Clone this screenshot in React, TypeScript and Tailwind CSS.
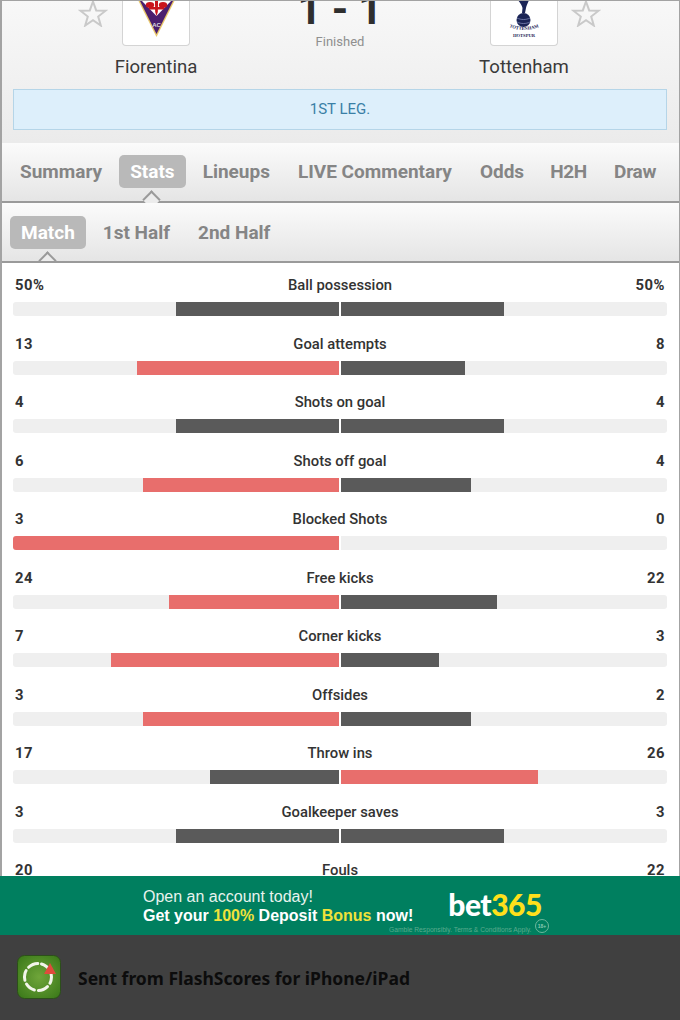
import React from "react";

const stats = [
  { name: "Ball possession", home: "50%", away: "50%", a: 50, b: 50 },
  { name: "Goal attempts", home: "13", away: "8", a: 13, b: 8 },
  { name: "Shots on goal", home: "4", away: "4", a: 4, b: 4 },
  { name: "Shots off goal", home: "6", away: "4", a: 6, b: 4 },
  { name: "Blocked Shots", home: "3", away: "0", a: 3, b: 0 },
  { name: "Free kicks", home: "24", away: "22", a: 24, b: 22 },
  { name: "Corner kicks", home: "7", away: "3", a: 7, b: 3 },
  { name: "Offsides", home: "3", away: "2", a: 3, b: 2 },
  { name: "Throw ins", home: "17", away: "26", a: 17, b: 26 },
  { name: "Goalkeeper saves", home: "3", away: "3", a: 3, b: 3 },
  { name: "Fouls", home: "20", away: "22", a: 20, b: 22 },
];

const Star = () => (
  <svg width="30" height="28" viewBox="0 0 30 28" className="absolute top-[-2px] left-[-17px]">
    <path d="M15 2.5 18.2 11.4 27.6 11.7 20.2 17.5 22.8 26.5 15 21.2 7.2 26.5 9.8 17.5 2.4 11.7 11.8 11.4Z" fill="none" stroke="#c9c9c9" strokeWidth="2" />
  </svg>
);

const ViolaCrest = () => (
  <svg width="66" height="43" viewBox="0 0 66 43">
    <path d="M15 -1 33.5 36 52 -1Z" fill="#e8c66a" />
    <path d="M17 0 33.5 33 50 0Z" fill="#4a1f6e" />
    <path d="M18 -1 33.5 15 49 -1Z" fill="#fff" />
    <path d="M32 -1h3v4l-.2 8-1.300 4-1.300-4-.2-8z" fill="#c9151c" />
    <path d="M26 6h15v2.500H26z" fill="#c9151c" />
    <ellipse cx="27" cy="4" rx="4.200" ry="2.900" fill="#c9151c" />
    <ellipse cx="40" cy="4" rx="4.200" ry="2.900" fill="#c9151c" />
    <text x="33.500" y="26" textAnchor="middle" fontSize="6" fontWeight="700" fill="#ddd" fontFamily="'Liberation Sans', sans-serif">AC</text>
  </svg>
);

const SpursCrest = () => (
  <svg width="66" height="43" viewBox="0 0 66 43">
    <path d="M27 -1c2 3 4 5 4.500 8l-.5 5h3l1-5c.5-3 2-5 3-8z" fill="#1a2456" />
    <circle cx="32.500" cy="19" r="7" fill="#1a2456" />
    <path d="M26 17c4 2 9 2 13 0M26 21c4 2 9 2 13 0" stroke="#8b93c2" strokeWidth="0.7" fill="none" />
    <path id="spursArc" d="M12 23Q33 35 54 23" fill="none" />
    <text fontSize="4.600" fontWeight="700" fill="#1a2456" fontFamily="'Liberation Serif', serif">
      <textPath href="#spursArc" startOffset="50%" textAnchor="middle">TOTTENHAM</textPath>
    </text>
    <text x="33" y="35.500" textAnchor="middle" fontSize="4.600" fontWeight="700" fill="#1a2456" fontFamily="'Liberation Serif', serif">HOTSPUR</text>
  </svg>
);

const Team = ({ name, crest }: { name: string; crest: React.ReactNode }) => (
  <div className="w-[122px] flex flex-col items-center">
    <div className="w-[68px] h-[45px] bg-white border border-t-0 border-[#d4d4d4] rounded-b-[4px] overflow-hidden">{crest}</div>
    <div className="mt-[8px] h-[26px] leading-[26px] text-[18.600px] text-[#3a3a3a] whitespace-nowrap">{name}</div>
  </div>
);

const Tab = ({ label, active, caret, extra }: { label: string; active?: boolean; caret?: boolean; extra?: string }) => (
  <div className={(active ? "bg-[#b9b9b9] text-white" : "text-[#858585]") + " relative h-[33px] leading-[33px] px-[11px] rounded-[5px] text-[19px] font-bold whitespace-nowrap " + (extra || "")}>
    {label}
    {caret && (
      <div className="absolute left-1/2 top-[38px] w-[13px] h-[13px] -ml-[7px] rotate-45 bg-[#ececec] border-l-2 border-t-2 border-[#9a9a9a]" />
    )}
  </div>
);

const StatRow = ({ name, home, away, a, b }: (typeof stats)[number]) => {
  const total = a + b;
  const left = (a / total) * 100;
  const right = (b / total) * 100;
  const leftColor = a > b ? "bg-[#e86e6c]" : "bg-[#5a5a5a]";
  const rightColor = b > a ? "bg-[#e86e6c]" : "bg-[#5a5a5a]";
  return (
    <div className="h-[58.5px] pt-[13px] shrink-0">
      <div className="h-[18px] leading-[18px] flex justify-between px-[2px] text-[14.800px] font-medium text-[#333]">
        <span className="w-[60px] font-bold tracking-[0.5px]">{home}</span>
        <span>{name}</span>
        <span className="w-[60px] text-right font-bold tracking-[0.5px]">{away}</span>
      </div>
      <div className="mt-[8px] h-[14px] flex gap-[2px]">
        <div className="flex-1 flex justify-end bg-[#efefef] rounded-l-[3px] overflow-hidden">
          <div className={leftColor} style={{ width: left + "%" }} />
        </div>
        <div className="flex-1 flex bg-[#efefef] rounded-r-[3px] overflow-hidden">
          <div className={rightColor} style={{ width: right + "%" }} />
        </div>
      </div>
    </div>
  );
};

export default function App() {
  return (
    <div className="w-[680px] h-[1020px] overflow-hidden flex flex-col bg-white font-['Roboto',sans-serif]">
      <div className="flex-1 min-h-0 flex flex-col overflow-hidden border-t border-l-2 border-r border-[#a3a3a3]">
        <div className="h-[142px] shrink-0 bg-gradient-to-b from-[#f8f8f8] to-[#ebebeb]">
          <div className="flex h-[88px]">
            <div className="relative ml-[93px]">
              <Star />
              <Team name="Fiorentina" crest={<ViolaCrest />} />
            </div>
            <div className="flex-1 flex flex-col items-center">
              <div className="h-[32px] -mt-[7px] flex items-center gap-[10px] text-[42px] font-bold leading-none text-[#2f2f2f]">
                <span>1</span>
                <span>-</span>
                <span>1</span>
              </div>
              <div className="mt-[7px] text-[13px] leading-[18px] text-[#8f8f8f]">Finished</div>
            </div>
            <div className="relative mr-[94px]">
              <Team name="Tottenham" crest={<SpursCrest />} />
              <div className="absolute top-0 left-[125px]">
                <Star />
              </div>
            </div>
          </div>
          <div className="ml-[11px] mr-[12px] h-[41px] bg-[#ddeffb] border border-[#b5d5e8] flex items-center justify-center text-[15px] text-[#3a7fa6]">
            1ST LEG.
          </div>
        </div>

        <div className="h-[60px] shrink-0 relative flex items-start pt-[12px] pl-[7px] gap-[6px] bg-gradient-to-b from-[#fbfbfb] to-[#e5e5e5] border-b-2 border-[#9a9a9a]">
          <Tab label="Summary" />
          <Tab label="Stats" active caret />
          <Tab label="Lineups" />
          <Tab label="LIVE Commentary" />
          <Tab label="Odds" />
          <Tab label="H2H" extra="-ml-[2px] tracking-[-0.3px]" />
          <Tab label="Draw" extra="-ml-[1px] tracking-[-0.2px]" />
        </div>
        <div className="h-[60px] shrink-0 relative flex items-start pt-[13px] pl-[8px] gap-[6px] bg-gradient-to-b from-[#fbfbfb] to-[#e5e5e5] border-b-2 border-[#9a9a9a] overflow-hidden">
          <Tab label="Match" active caret />
          <Tab label="1st Half" />
          <Tab label="2nd Half" />
        </div>

        <div className="flex-1 min-h-0 overflow-hidden pl-[11px] pr-[12px] bg-white">
          {stats.map((s) => (
            <StatRow key={s.name} {...s} />
          ))}
        </div>
      </div>

      <div className="h-[59px] shrink-0 bg-[#007f5f] relative flex items-start pl-[143px] font-['Liberation_Sans',sans-serif]">
        <div className="pt-[11px] text-[16px] leading-[19px] text-[#e8f3ee]">
          <div>Open an account today!</div>
          <div className="font-bold text-white whitespace-nowrap">
            Get your <span className="text-[#f0e23a]">100%</span> Deposit <span className="text-[#f0e23a]">Bonus</span> now!
          </div>
        </div>
        <div className="ml-[35px] mt-[11px] text-[30px] leading-[34px] font-black tracking-[-0.5px] font-['Lato',sans-serif] text-white">
          bet<span className="text-[#ffe01b]">365</span>
        </div>
        <div className="absolute left-[389px] top-[49px] text-[6.700px] leading-[9px] text-[#5bab8e] whitespace-nowrap">
          Gamble Responsibly. Terms &amp; Conditions Apply.
        </div>
        <div className="absolute left-[535px] top-[43px] w-[14px] h-[14px] rounded-full border border-[#6db89c] text-[5px] font-bold leading-[12px] text-center text-[#8cc9b2]">
          18+
        </div>
      </div>

      <div className="h-[85px] shrink-0 bg-[#404040] flex items-center pl-[17px] gap-[17px] font-['Noto_Sans',sans-serif]">
        <svg width="44" height="44" viewBox="0 0 44 44" className="mb-[2px]">
          <defs>
            <radialGradient id="appGreen" cx="50%" cy="50%" r="65%">
              <stop offset="0%" stopColor="#6fa53a" />
              <stop offset="100%" stopColor="#3c7a1a" />
            </radialGradient>
          </defs>
          <rect x="0.5" y="0.5" width="43" height="43" rx="7" fill="url(#appGreen)" stroke="#2c4f1a" />
          <circle cx="21" cy="22" r="13.500" fill="none" stroke="#f2f5ea" strokeWidth="3" strokeDasharray="10 4.100" strokeLinecap="round" transform="rotate(-75 21 22)" />
          <path d="M33 8 39 19H27Z" fill="#e04b3c" />
        </svg>
        <div className="mt-[2px] text-[17.500px] font-bold text-[#0c0c0c] whitespace-nowrap">Sent from FlashScores for iPhone/iPad</div>
      </div>
    </div>
  );
}
